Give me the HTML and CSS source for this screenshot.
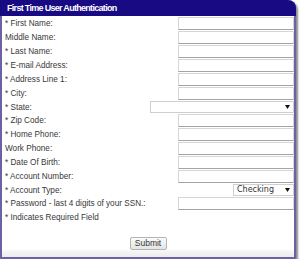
FILE: index.html
```html
<!DOCTYPE html>
<html lang="en">
<head>
    <meta charset="UTF-8">
    <meta name="viewport" content="width=device-width, initial-scale=1.0">
    <title>First Time User Authentication</title>
    <link rel="stylesheet" href="styles.css">
</head>
<body>
    <div class="auth-box">
        <div class="auth-header">First Time User Authentication</div>

        <form class="auth-form">
            <div class="row">
                <label for="first-name">* First Name:</label>
                <input type="text" id="first-name" class="field" autofocus>
            </div>
            <div class="row">
                <label for="middle-name">Middle Name:</label>
                <input type="text" id="middle-name" class="field">
            </div>
            <div class="row">
                <label for="last-name">* Last Name:</label>
                <input type="text" id="last-name" class="field">
            </div>
            <div class="row">
                <label for="email">* E-mail Address:</label>
                <input type="text" id="email" class="field">
            </div>
            <div class="row">
                <label for="address">* Address Line 1:</label>
                <input type="text" id="address" class="field">
            </div>
            <div class="row">
                <label for="city">* City:</label>
                <input type="text" id="city" class="field">
            </div>
            <div class="row row-select">
                <label for="state">* State:</label>
                <select id="state" class="picker picker-state">
                    <option></option>
                </select>
            </div>
            <div class="row">
                <label for="zip">* Zip Code:</label>
                <input type="text" id="zip" class="field">
            </div>
            <div class="row">
                <label for="home-phone">* Home Phone:</label>
                <input type="text" id="home-phone" class="field">
            </div>
            <div class="row">
                <label for="work-phone">Work Phone:</label>
                <input type="text" id="work-phone" class="field">
            </div>
            <div class="row">
                <label for="dob">* Date Of Birth:</label>
                <input type="text" id="dob" class="field">
            </div>
            <div class="row">
                <label for="account-number">* Account Number:</label>
                <input type="text" id="account-number" class="field">
            </div>
            <div class="row row-select">
                <label for="account-type">* Account Type:</label>
                <select id="account-type" class="picker picker-type">
                    <option>Checking</option>
                    <option>Savings</option>
                </select>
            </div>
            <div class="row">
                <label for="password">* Password - last 4 digits of your SSN.:</label>
                <input type="password" id="password" class="field">
            </div>

            <p class="note">* Indicates Required Field</p>

            <div class="actions">
                <button type="submit">Submit</button>
            </div>
        </form>

        <div class="auth-footer"></div>
    </div>
</body>
</html>
```

FILE: styles.css
```css
body {
    margin: 0;
    padding: 0;
    background-color: white;
    font-family: 'Liberation Sans', Arial, sans-serif;
}

.auth-box {
    width: 292px;
    border: 2px solid #6a61a6;
    border-top: 0;
    border-radius: 0 8px 0 0;
    box-shadow: 2px 2px 2px rgba(0, 0, 0, 0.45);
    background-color: white;
}

.auth-header {
    height: 16px;
    margin: 0 -2px;
    padding-left: 7px;
    background-color: #170a82;
    border-radius: 0 8px 0 0;
    color: white;
    font-size: 9px;
    font-weight: bold;
    letter-spacing: -0.7px;
    line-height: 16px;
}

.auth-form {
    margin: 0;
    padding: 1px 0 0 3px;
}

.row {
    display: flex;
    justify-content: space-between;
    align-items: flex-start;
    height: 14px;
}

.row-select {
    height: 13px;
}

label {
    color: #383838;
    font-size: 8.2px;
    line-height: 14px;
}

.row-select label {
    line-height: 13px;
}

.field {
    width: 116px;
    height: 13px;
    margin: 0;
    padding: 0 2px;
    box-sizing: border-box;
    border: 1px solid #d6d6d6;
    border-bottom-color: #a4a4a4;
    background-color: white;
    font-size: 8px;
    outline: none;
}

.picker {
    height: 12px;
    margin: 0;
    padding: 0 10px 0 3px;
    box-sizing: border-box;
    border: 1px solid #cfcfcf;
    border-radius: 0;
    background: white url("data:image/svg+xml;utf8,<svg xmlns='http://www.w3.org/2000/svg' width='5' height='4'><path d='M0 0h5L2.5 4z' fill='%23111'/></svg>") no-repeat right 3px center;
    color: #333;
    font-family: 'DejaVu Sans', Verdana, sans-serif;
    font-size: 8px;
    line-height: 10px;
    -webkit-appearance: none;
    appearance: none;
    outline: none;
}

.picker-state {
    width: 144px;
}

.picker-type {
    width: 61px;
}

.note {
    margin: 0;
    height: 14px;
    color: #383838;
    font-size: 8.2px;
    line-height: 14px;
}

.actions {
    display: flex;
    justify-content: center;
    padding: 12px 3px 0 0;
}

button {
    width: 37px;
    height: 13px;
    padding: 0;
    border: 1px solid #b4b4b4;
    border-radius: 2px;
    background: linear-gradient(#fbfbfb, #e4e4e4);
    color: #333;
    font-family: 'Liberation Sans', Arial, sans-serif;
    font-size: 8.5px;
    line-height: 11px;
    cursor: pointer;
}

.auth-footer {
    height: 7px;
    background: linear-gradient(#f7f7f7, #ececec);
}
```
